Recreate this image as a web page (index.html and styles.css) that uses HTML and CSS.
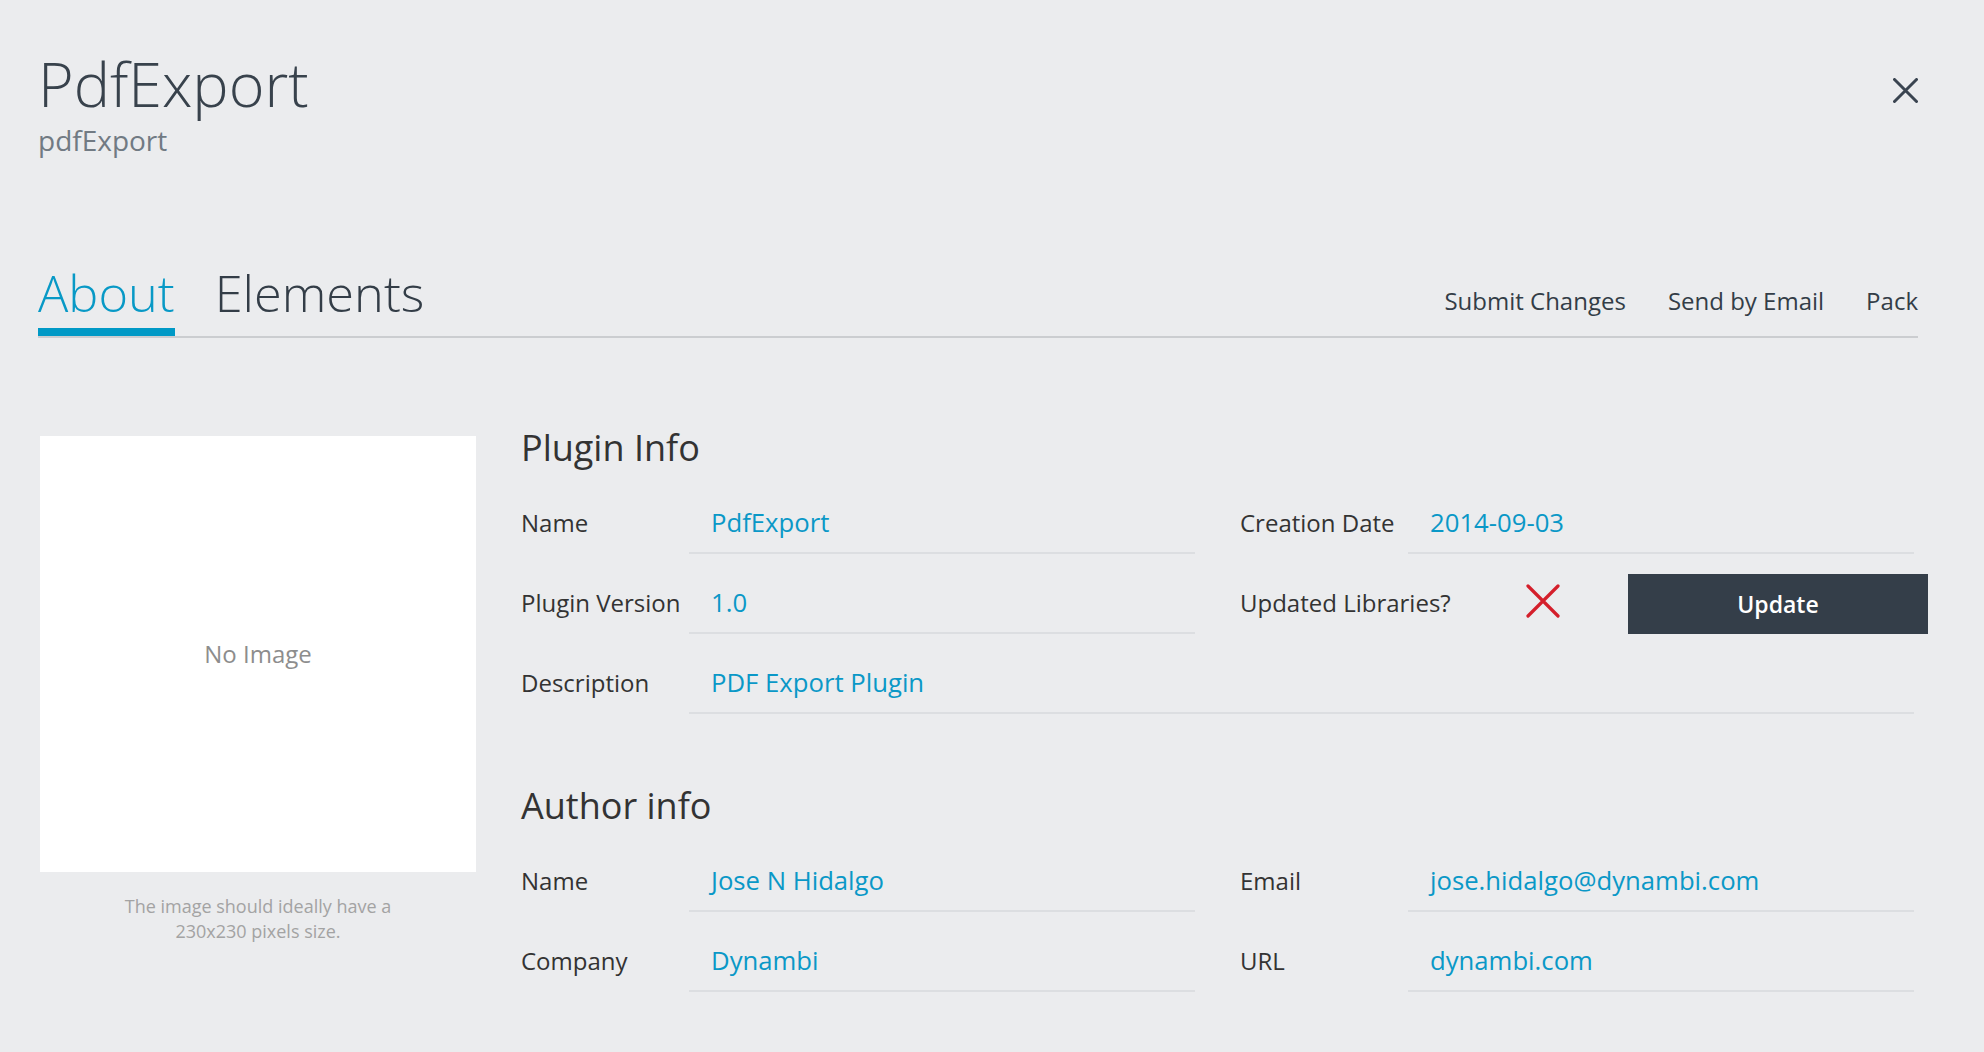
FILE: index.html
```html
<!DOCTYPE html>
<html lang="en">
<head>
<meta charset="utf-8">
<title>PdfExport</title>
<link rel="stylesheet" href="styles.css">
</head>
<body>
<div class="page">
  <header class="header">
    <div class="titles">
      <h1 class="title">PdfExport</h1>
      <div class="subtitle">pdfExport</div>
    </div>
    <button class="close" aria-label="Close">
      <svg width="25" height="25" viewBox="0 0 25 25"><path d="M1.5 1.5 L23.5 23.5 M23.5 1.5 L1.5 23.5" stroke="#3a4450" stroke-width="3" stroke-linecap="round" fill="none"/></svg>
    </button>
  </header>

  <nav class="tabs">
    <div class="tab active">About</div>
    <div class="tab">Elements</div>
    <div class="actions">
      <span class="action">Submit Changes</span>
      <span class="action">Send by Email</span>
      <span class="action">Pack</span>
    </div>
  </nav>

  <main class="main">
    <div class="imgcol">
      <div class="imgbox">No Image</div>
      <p class="caption">The image should ideally have a<br>230x230 pixels size.</p>
    </div>

    <div class="info">
      <h2 class="heading">Plugin Info</h2>
      <div class="grid">
        <div class="row"><span class="label">Name</span><span class="field">PdfExport</span></div>
        <div class="row"><span class="label">Creation Date</span><span class="field">2014-09-03</span></div>
        <div class="row"><span class="label">Plugin Version</span><span class="field">1.0</span></div>
        <div class="row updated">
          <span class="label wide">Updated Libraries?</span>
          <svg class="xmark" width="34" height="34" viewBox="0 0 34 34"><path d="M2 2 L32 32 M32 2 L2 32" stroke="#d41f2b" stroke-width="3.2" stroke-linecap="round" fill="none"/></svg>
          <button class="update">Update</button>
        </div>
        <div class="row span2"><span class="label">Description</span><span class="field">PDF Export Plugin</span></div>
      </div>

      <h2 class="heading author">Author info</h2>
      <div class="grid">
        <div class="row"><span class="label">Name</span><span class="field">Jose N Hidalgo</span></div>
        <div class="row"><span class="label">Email</span><span class="field">jose.hidalgo@dynambi.com</span></div>
        <div class="row"><span class="label">Company</span><span class="field">Dynambi</span></div>
        <div class="row"><span class="label">URL</span><span class="field">dynambi.com</span></div>
      </div>
    </div>
  </main>
</div>
</body>
</html>
```

FILE: styles.css
```css
* { box-sizing: border-box; }
html, body {
  margin: 0;
  background: #ebecee;
  font-family: "Open Sans", "Noto Sans", sans-serif;
  color: #333;
}
.page {
  padding: 0 66px 0 38px;
}
.header {
  display: flex;
  justify-content: space-between;
  align-items: flex-start;
  padding-top: 49px;
}
.title {
  margin: 0;
  font-weight: 300;
  font-size: 61px;
  line-height: 70px;
  color: #38424c;
}
.subtitle {
  margin-top: 5px;
  font-size: 28px;
  line-height: 32px;
  color: #717a83;
}
.close {
  margin-top: 29px;
  padding: 0;
  border: 0;
  background: none;
  width: 25px;
  height: 25px;
  display: block;
}
.close svg { display: block; }

.tabs {
  margin-top: 107px;
  display: flex;
  align-items: flex-end;
  border-bottom: 2px solid #cbcdd0;
}
.tab {
  font-weight: 300;
  font-size: 50.5px;
  line-height: 60px;
  padding-bottom: 5px;
  border-bottom: 8px solid transparent;
  color: #333d47;
  margin-right: 40px;
}
.tab.active {
  color: #0899c6;
  border-bottom-color: #0099c6;
}
.actions {
  margin-left: auto;
  display: flex;
  gap: 42px;
  margin-bottom: 19px;
  font-size: 24px;
  line-height: 32px;
  color: #333d47;
}

.main {
  display: flex;
  margin-top: 88px;
}
.imgcol {
  width: 436px;
  margin-left: 2px;
  margin-right: 45px;
  flex-shrink: 0;
}
.imgbox {
  margin-top: 10px;
  height: 436px;
  background: #fff;
  display: flex;
  align-items: center;
  justify-content: center;
  font-size: 24px;
  line-height: 30px;
  color: #8d8d8d;
}
.caption {
  margin: 22px 0 0;
  text-align: center;
  font-size: 18px;
  line-height: 25px;
  color: #a3a3a3;
}

.info { flex: 1; }
.heading {
  margin: 0;
  font-weight: 400;
  font-size: 36px;
  line-height: 44px;
  color: #333;
}
.heading.author { margin-top: 70px; }
.grid {
  margin-top: 4px;
  display: grid;
  grid-template-columns: 674px 674px;
  column-gap: 45px;
}
.row {
  display: flex;
  align-items: baseline;
}
.row.span2 { grid-column: span 2; }
.label {
  width: 168px;
  flex-shrink: 0;
  font-size: 24px;
  line-height: 32px;
  color: #333;
}
.field {
  flex: 1;
  padding: 32px 0 12px 22px;
  font-size: 25.7px;
  line-height: 34px;
  color: #0a98c7;
  border-bottom: 2px solid #dcdee1;
}
.row.updated {
  height: 80px;
  align-items: flex-end;
}
.label.wide {
  width: 286px;
  margin-bottom: 15px;
}
.xmark {
  flex-shrink: 0;
  display: block;
  margin-bottom: 16px;
}
.update {
  flex-shrink: 0;
  margin-left: 68px;
  width: 300px;
  height: 60px;
  border: 0;
  background: #343e49;
  color: #fff;
  font-family: "Open Sans", "Noto Sans", sans-serif;
  font-weight: 600;
  font-size: 23px;
  padding: 0;
}
```
